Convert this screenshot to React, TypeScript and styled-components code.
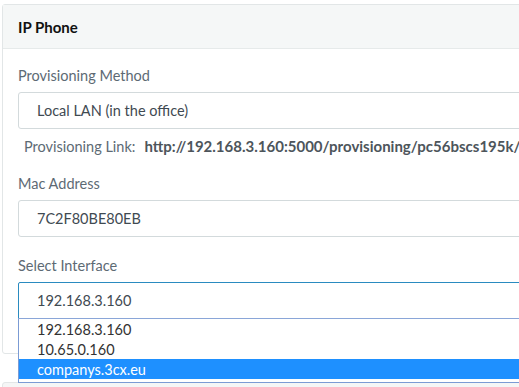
import React from 'react';
import styled, { createGlobalStyle } from 'styled-components';

const Global = createGlobalStyle`
  html, body {
    margin: 0;
    padding: 0;
    overflow: hidden;
    background: #fff;
  }
  body {
    font-family: Lato, "Open Sans", sans-serif;
  }
`;

const Page = styled.div`
  padding: 4px 0 0 2px;
  width: 600px;
`;

const Panel = styled.div`
  border: 1px solid #e2e6e7;
  border-radius: 3px;
  background: #fff;
  margin-bottom: 28px;
`;

const PanelHeader = styled.div`
  height: 43px;
  display: flex;
  align-items: center;
  padding: 0 15px;
  background: #f5f7f7;
  border-bottom: 1px solid #e6eaea;
  font-size: 15px;
  font-weight: bold;
  color: #111;
`;

const PanelBody = styled.div`
  padding: 17px 15px 16px;
  display: flex;
  flex-direction: column;
`;

const Label = styled.div`
  font-size: 14.5px;
  line-height: 20px;
  color: #5d6a74;
  margin-bottom: 6px;
`;

const Field = styled.div<{ $focused?: boolean }>`
  height: 37px;
  box-sizing: border-box;
  border: 1px solid ${p => (p.$focused ? '#2a8bc0' : '#d3dadc')};
  border-radius: ${p => (p.$focused ? '2px 2px 0 0' : '3px')};
  display: flex;
  align-items: center;
  padding: 0 18px;
  font-size: 14.5px;
  color: #3f4a52;
`;

const FieldGroup = styled.div<{ $gap: number }>`
  position: relative;
  margin-bottom: ${p => p.$gap}px;
`;

const LinkRow = styled.div`
  display: flex;
  align-items: baseline;
  gap: 9px;
  padding: 0 6px;
  margin: 0 0 17px;
  font-size: 14.5px;
  line-height: 20px;
  color: #5d6a74;
  white-space: nowrap;
`;

const LinkValue = styled.span`
  font-size: 15px;
  font-weight: bold;
  color: #4d555b;
`;

const Dropdown = styled.div`
  position: absolute;
  left: 0;
  right: 0;
  top: 36px;
  background: #fff;
  border: 1px solid #7b9bd4;
  border-top-color: #8aa6d8;
  padding-bottom: 3px;
  z-index: 2;
`;

const Option = styled.div<{ $selected?: boolean }>`
  height: 20px;
  display: flex;
  align-items: center;
  padding: 0 18px;
  font-size: 14.5px;
  color: ${p => (p.$selected ? '#fff' : '#333')};
  background: ${p => (p.$selected ? '#1e90ff' : 'transparent')};
`;

const NextPanel = styled.div`
  border: 1px solid #e2e6e7;
  border-radius: 3px 3px 0 0;
  background: #f5f6f6;
  height: 43px;
`;

const options = ['192.168.3.160', '10.65.0.160', 'companys.3cx.eu'];

export default function App() {
  return (
    <Page>
      <Global />
      <Panel>
        <PanelHeader>IP Phone</PanelHeader>
        <PanelBody>
          <Label>Provisioning Method</Label>
          <FieldGroup $gap={7}>
            <Field>Local LAN (in the office)</Field>
          </FieldGroup>
          <LinkRow>
            <span>Provisioning Link:</span>
            <LinkValue>http://192.168.3.160:5000/provisioning/pc56bscs195k/</LinkValue>
          </LinkRow>
          <Label>Mac Address</Label>
          <FieldGroup $gap={19}>
            <Field>7C2F80BE80EB</Field>
          </FieldGroup>
          <Label>Select Interface</Label>
          <FieldGroup $gap={18}>
            <Field $focused>192.168.3.160</Field>
            <Dropdown>
              {options.map((o, i) => (
                <Option key={o} $selected={i === 2}>
                  {o}
                </Option>
              ))}
            </Dropdown>
          </FieldGroup>
        </PanelBody>
      </Panel>
      <NextPanel />
    </Page>
  );
}
